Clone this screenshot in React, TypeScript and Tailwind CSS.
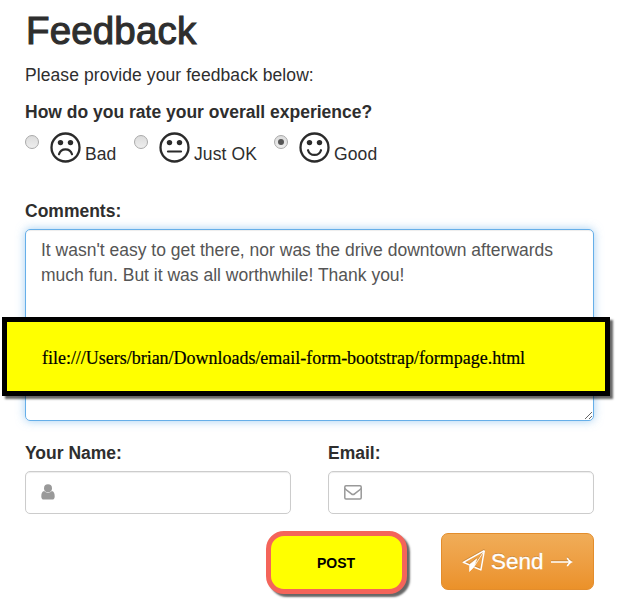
import { useState } from 'react'

type Rating = 'bad' | 'ok' | 'good'

const ratings: { value: Rating; label: string; mouth: string; className: string }[] = [
  { value: 'bad', label: 'Bad', mouth: 'M9 22.300c.9-3 3.400-4.900 6.500-4.900s5.600 1.900 6.500 4.900', className: 'w-[109px]' },
  { value: 'ok', label: 'Just OK', mouth: 'M9 19.500h13', className: 'w-[140px]' },
  { value: 'good', label: 'Good', mouth: 'M9 18.200c.9 3 3.400 4.700 6.500 4.700s5.600-1.700 6.500-4.700', className: 'w-[120px]' },
]

function Face({ mouth }: { mouth: string }) {
  return (
    <svg viewBox="0 0 31 31" className="ml-[11px] h-[31px] w-[31px] shrink-0" fill="none" stroke="#2b2b2b" strokeWidth="2.300" strokeLinecap="round">
      <circle cx="15.500" cy="15.500" r="14" />
      <path d={mouth} strokeWidth="2.200" />
      <circle cx="10.500" cy="10.600" r="2.700" fill="#2b2b2b" stroke="none" />
      <circle cx="20.500" cy="10.600" r="2.700" fill="#2b2b2b" stroke="none" />
    </svg>
  )
}

function UserIcon() {
  return (
    <svg viewBox="0 0 14 16" className="-mt-0.5 h-4 w-3.5" fill="#999">
      <path d="M3.200 7C1.100 7.300.3 9.500.3 12.400c0 2 .9 3.200 2.500 3.200h8.400c1.600 0 2.500-1.200 2.500-3.200 0-2.900-.8-5.100-2.900-5.400C9.700 8.100 8.500 8.700 7 8.700S4.300 8.100 3.200 7Z" />
      <circle cx="7" cy="4.300" r="4" />
    </svg>
  )
}

function EnvelopeIcon() {
  return (
    <svg viewBox="0 0 18 15" className="h-[15px] w-[18px]" fill="none" stroke="#999" strokeWidth="1.500">
      <rect x=".8" y=".8" width="16.400" height="13.200" rx="1.200" />
      <path d="M.9 3.400c1.700 1.900 4.200 3.500 6.200 5.200.8.7 1.300 1 1.900 1s1.100-.3 1.900-1c2-1.700 4.500-3.300 6.200-5.200" />
    </svg>
  )
}

function PlaneIcon() {
  return (
    <svg viewBox="0 0 24 24" className="-mt-0.5 h-6 w-6 drop-shadow-[0_-1px_0_rgba(0,0,0,0.15)]" fill="none" stroke="#fff" strokeWidth="1.500" strokeLinejoin="round">
      <path d="M22.300 1.700 1.300 13.300l6.200 2.600M22.300 1.700l-3.400 19.200-6.500-2.700" />
      <path d="M22.300 1.700 12.200 17.300" strokeWidth=".8" />
      <path d="M14.800 9.800 7.500 15.600v6.900l4.500-4.500 2.800-8.200Z" fill="#fff" strokeWidth=".6" />
    </svg>
  )
}

function ArrowIcon() {
  return (
    <svg viewBox="0 0 22 10" className="ml-[7px] h-2.5 w-[22px] drop-shadow-[0_-1px_0_rgba(0,0,0,0.15)]" fill="#fff">
      <path d="M0 4.200h17.800C16.700 3.400 16 2.200 15.600.7h1.500C18.100 2.700 19.700 4.200 22 5c-2.300.8-3.900 2.300-4.900 4.300h-1.500c.4-1.500 1.100-2.700 2.200-3.500H0Z" />
    </svg>
  )
}

export default function App() {
  const [rating, setRating] = useState<Rating>('good')
  const [comments, setComments] = useState(
    "It wasn't easy to get there, nor was the drive downtown afterwards much fun. But it was all worthwhile! Thank you!"
  )

  return (
    <div className="relative h-[611px] w-[624px] overflow-hidden bg-white pl-[25px] font-['Liberation_Sans',Arial,sans-serif] text-[17.5px] leading-[25px] text-[#2e2e2e]">
      <form className="w-[569px]" onSubmit={(e) => e.preventDefault()}>
        <h1 className="pt-2.5 pl-px text-[38.5px] leading-[42px] tracking-[0.15px] [-webkit-text-stroke:1.1px_#2e2e2e]">Feedback</h1>
        <p className="mt-[11px] tracking-[0.08px]">Please provide your feedback below:</p>

        <div className="mt-3 font-bold">How do you rate your overall experience?</div>
        <div className="mt-[7px] flex h-[42px]">
          {ratings.map((r) => (
            <label key={r.value} className={`flex items-start ${r.className}`}>
              <input
                type="radio"
                name="experience"
                checked={rating === r.value}
                onChange={() => setRating(r.value)}
                className="peer sr-only"
              />
              <span className="mt-[3px] flex h-3.5 w-3.5 shrink-0 items-center justify-center rounded-full border border-[#aaa] bg-linear-to-b from-[#dcdcdc] to-[#eee]">
                {rating === r.value && <span className="h-1.5 w-1.5 rounded-full bg-[#555]" />}
              </span>
              <Face mouth={r.mouth} />
              <span className="ml-1 mt-2.5 whitespace-nowrap tracking-[0.1px]">{r.label}</span>
            </label>
          ))}
        </div>

        <label className="mt-[25px] block font-bold" htmlFor="comments">Comments:</label>
        <textarea
          id="comments"
          value={comments}
          onChange={(e) => setComments(e.target.value)}
          className="mt-[5px] block h-[192px] w-full rounded-[5px] border border-[#66afe9] px-[15px] py-2 text-[#555] shadow-[inset_0_1px_1px_rgba(0,0,0,0.075),0_0_10px_rgba(102,175,233,0.6)] outline-none"
        />

        <div className="mt-5 grid grid-cols-2 gap-[37px]">
          <div>
            <label className="block font-bold">Your Name:</label>
            <div className="mt-[5px] flex h-[43px] items-center rounded-[5px] border border-[#ccc] pl-[15px] shadow-[inset_0_1px_1px_rgba(0,0,0,0.075)]">
              <UserIcon />
            </div>
          </div>
          <div>
            <label className="block font-bold">Email:</label>
            <div className="mt-[5px] flex h-[43px] items-center rounded-[5px] border border-[#ccc] pl-[15px] shadow-[inset_0_1px_1px_rgba(0,0,0,0.075)]">
              <EnvelopeIcon />
            </div>
          </div>
        </div>

        <div className="mt-[17px] flex justify-end gap-[34px]">
          <div className="flex h-[63px] w-[141px] items-center justify-center rounded-[18px] border-5 border-[#f4645a] bg-[#ffff00] pr-px text-sm font-bold text-black shadow-[3px_3px_2px_rgba(0,0,0,0.6)]">
            POST
          </div>
          <button
            type="submit"
            className="mt-0.5 flex h-[57px] w-[153px] items-center rounded-[7px] border border-[#e38d2c] bg-linear-to-b from-[#f0ad58] to-[#eb9129] pl-5 text-[22.500px] text-white [text-shadow:0_-1px_0_rgba(0,0,0,0.2)]"
          >
            <PlaneIcon />
            <span className="-mt-px ml-[5px] [-webkit-text-stroke:0.3px_#fff]">Send</span>
            <ArrowIcon />
          </button>
        </div>
      </form>

      <div className="absolute left-[2px] top-[317px] flex h-[79px] w-[608px] items-center border-5 border-black bg-[#ffff00] pl-[35px] pt-1 font-['Liberation_Serif',serif] text-[18px] tracking-[-0.02px] text-black shadow-[3px_3px_2px_rgba(0,0,0,0.6)] [-webkit-text-stroke:0.2px_#000]">
        file:///Users/brian/Downloads/email-form-bootstrap/formpage.html
      </div>
    </div>
  )
}
